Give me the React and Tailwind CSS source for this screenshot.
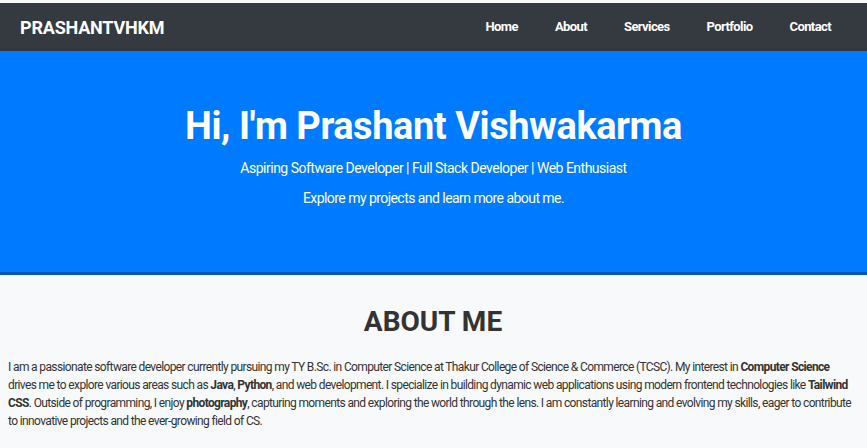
import React from "react";

const links = ["Home", "About", "Services", "Portfolio", "Contact"];

const Navbar = () => (
  <nav className="h-12 bg-[#343a40] flex items-center justify-between pl-5 pr-9">
    <div className="text-white font-bold text-[18px] tracking-[-0.2px]">PRASHANTVHKM</div>
    <ul className="flex items-center gap-[37px]">
      {links.map((l) => (
        <li key={l} className="text-white font-bold text-[13px] tracking-[-0.6px]">
          {l}
        </li>
      ))}
    </ul>
  </nav>
);

const Hero = () => (
  <header className="h-[224px] bg-[#007bff] border-b-[3px] border-[#0056b3] flex flex-col items-center text-white pt-[53px]">
    <h1 className="text-[38px] font-bold leading-[44px] tracking-[-0.45px]">Hi, I'm Prashant Vishwakarma</h1>
    <p className="text-[14px] mt-[10px] leading-5 tracking-[-0.5px]">
      Aspiring Software Developer | Full Stack Developer | Web Enthusiast
    </p>
    <p className="text-[14px] mt-[10px] leading-5 tracking-[-0.55px]">Explore my projects and learn more about me.</p>
  </header>
);

const About = () => (
  <section className="bg-[#f8f9fa] pl-2 pr-[9px] pt-[31px] pb-8 text-[#333]">
    <h2 className="text-center text-[28px] font-bold leading-8 text-[#333]">ABOUT ME</h2>
    <p className="mt-[20px] text-[12px] leading-[18px] tracking-[-0.63px] text-[#333]">
      I am a passionate software developer currently pursuing my TY B.Sc. in Computer Science at Thakur College of
      Science &amp; Commerce (TCSC). My interest in <strong>Computer Science</strong> drives me to explore various
      areas such as <strong>Java</strong>, <strong>Python</strong>, and web development. I specialize in building
      dynamic web applications using modern frontend technologies like <strong>Tailwind CSS</strong>. Outside of
      programming, I enjoy <strong>photography</strong>, capturing moments and exploring the world through the lens.
      I am constantly learning and evolving my skills, eager to contribute to innovative projects and the
      ever-growing field of CS.
    </p>
  </section>
);

export default function App() {
  return (
    <div className="min-h-screen bg-[#f8f9fa] font-['Roboto',sans-serif] pt-[3px]">
      <Navbar />
      <Hero />
      <About />
    </div>
  );
}
